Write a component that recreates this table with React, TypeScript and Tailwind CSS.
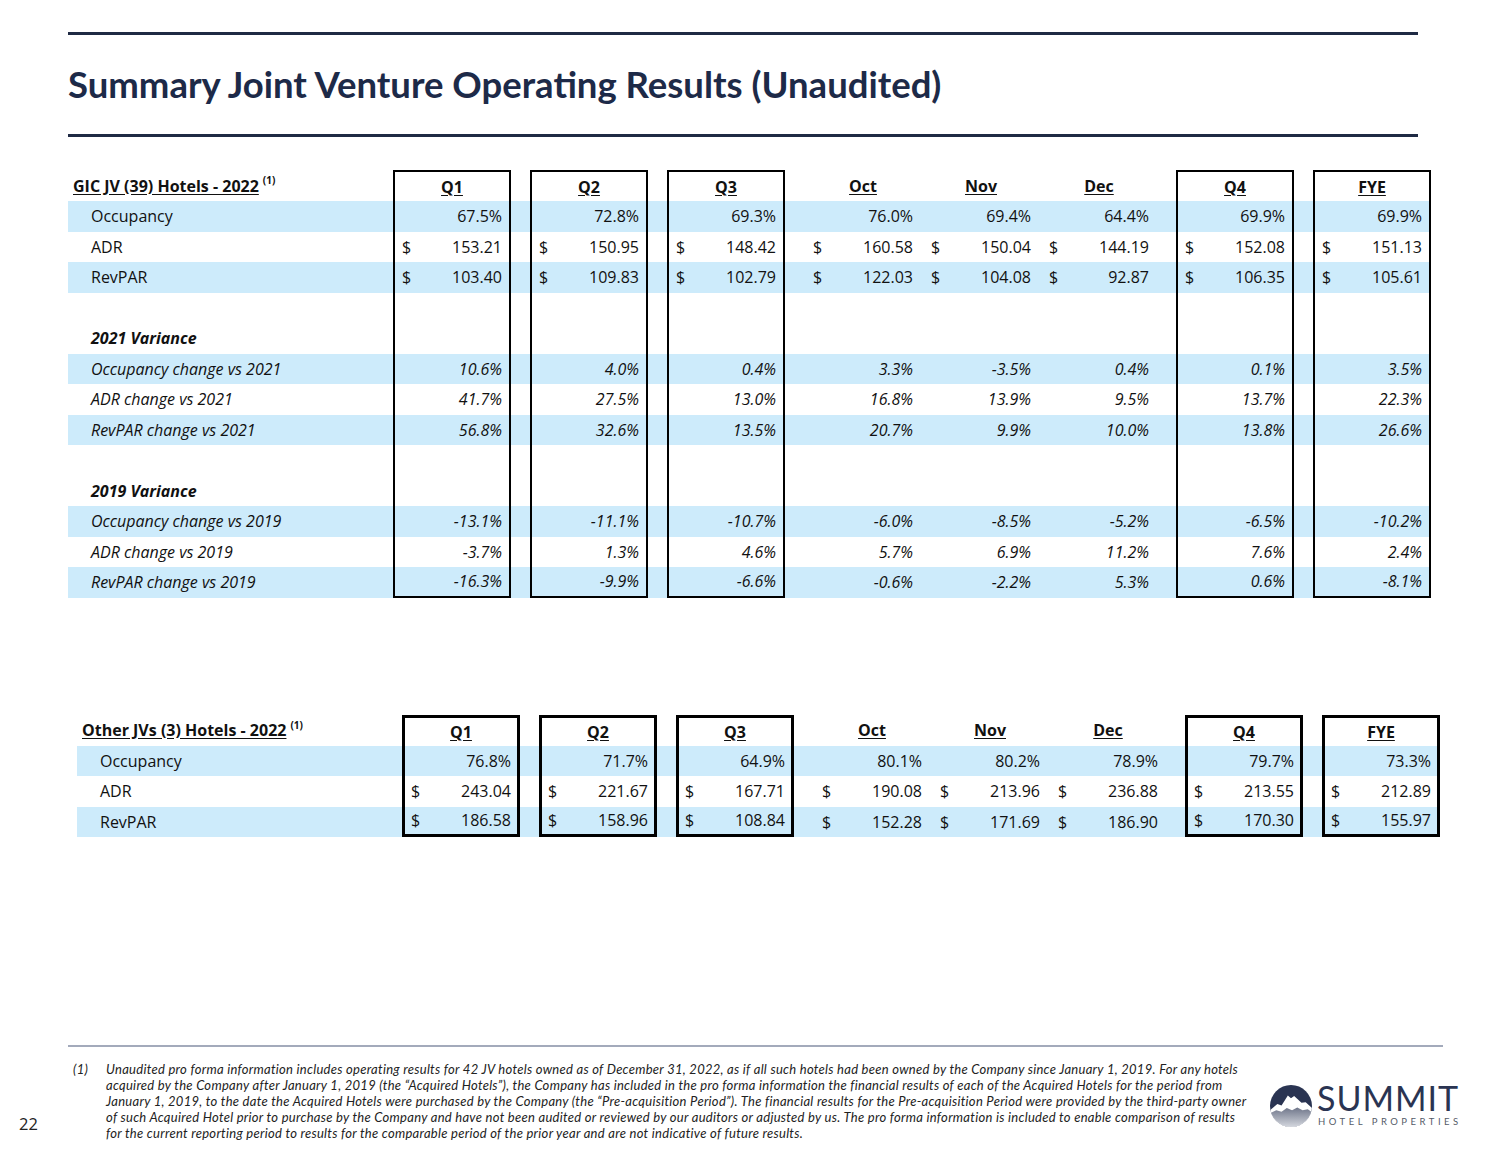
import React from "react";

type Row =
  | { kind: "blank" }
  | { kind: "section"; label: string }
  | { kind: "data"; label: string; values: string[]; dollar?: boolean; italic?: boolean; blue: boolean };

const COLS = ["Q1", "Q2", "Q3", "Oct", "Nov", "Dec", "Q4", "FYE"];
const BOXED = [true, true, true, false, false, false, true, true];

// slots in the grid: label, then value columns with spacer slots between boxes
const SLOTS: (number | "sp")[] = [0, "sp", 1, "sp", 2, "sp", 3, 4, 5, "sp", 6, "sp", 7];

const GIC_ROWS: Row[] = [
  { kind: "data", label: "Occupancy", blue: true, values: ["67.5%", "72.8%", "69.3%", "76.0%", "69.4%", "64.4%", "69.9%", "69.9%"] },
  { kind: "data", label: "ADR", blue: false, dollar: true, values: ["153.21", "150.95", "148.42", "160.58", "150.04", "144.19", "152.08", "151.13"] },
  { kind: "data", label: "RevPAR", blue: true, dollar: true, values: ["103.40", "109.83", "102.79", "122.03", "104.08", "92.87", "106.35", "105.61"] },
  { kind: "blank" },
  { kind: "section", label: "2021 Variance" },
  { kind: "data", label: "Occupancy change vs 2021", blue: true, italic: true, values: ["10.6%", "4.0%", "0.4%", "3.3%", "-3.5%", "0.4%", "0.1%", "3.5%"] },
  { kind: "data", label: "ADR change vs 2021", blue: false, italic: true, values: ["41.7%", "27.5%", "13.0%", "16.8%", "13.9%", "9.5%", "13.7%", "22.3%"] },
  { kind: "data", label: "RevPAR change vs 2021", blue: true, italic: true, values: ["56.8%", "32.6%", "13.5%", "20.7%", "9.9%", "10.0%", "13.8%", "26.6%"] },
  { kind: "blank" },
  { kind: "section", label: "2019 Variance" },
  { kind: "data", label: "Occupancy change vs 2019", blue: true, italic: true, values: ["-13.1%", "-11.1%", "-10.7%", "-6.0%", "-8.5%", "-5.2%", "-6.5%", "-10.2%"] },
  { kind: "data", label: "ADR change vs 2019", blue: false, italic: true, values: ["-3.7%", "1.3%", "4.6%", "5.7%", "6.9%", "11.2%", "7.6%", "2.4%"] },
  { kind: "data", label: "RevPAR change vs 2019", blue: true, italic: true, values: ["-16.3%", "-9.9%", "-6.6%", "-0.6%", "-2.2%", "5.3%", "0.6%", "-8.1%"] },
];

const OTHER_ROWS: Row[] = [
  { kind: "data", label: "Occupancy", blue: true, values: ["76.8%", "71.7%", "64.9%", "80.1%", "80.2%", "78.9%", "79.7%", "73.3%"] },
  { kind: "data", label: "ADR", blue: false, dollar: true, values: ["243.04", "221.67", "167.71", "190.08", "213.96", "236.88", "213.55", "212.89"] },
  { kind: "data", label: "RevPAR", blue: true, dollar: true, values: ["186.58", "158.96", "108.84", "152.28", "171.69", "186.90", "170.30", "155.97"] },
];

const GRID =
  "grid grid-cols-[325px_118px_19px_118px_19px_118px_19px_118px_118px_118px_18px_118px_19px_118px]";

function edge(boxed: boolean, thick: boolean, top: boolean, bottom: boolean) {
  if (!boxed) return "px-[9px]";
  let c = thick ? "border-x-[3px] border-black px-[6px]" : "border-x-2 border-black px-[7px]";
  if (top) c += thick ? " border-t-[3px]" : " border-t-2";
  if (bottom) c += thick ? " border-b-[3px]" : " border-b-2";
  return c;
}

function Table({ title, rows, thick }: { title: string; rows: Row[]; thick: boolean }) {
  return (
    <div className="flex flex-col w-[1363px] text-[16px] text-[#111]">
      <div className={`${GRID} h-[31px]`}>
        <div className="flex items-center pl-[5px]">
          <span className="font-bold underline underline-offset-2">{title}</span>
          <span className="font-bold text-[10px] ml-[4px] -mt-[10px]">(1)</span>
        </div>
        {SLOTS.map((s, i) =>
          s === "sp" ? (
            <div key={i} />
          ) : (
            <div
              key={i}
              className={`flex items-center justify-center font-bold ${edge(BOXED[s], thick, true, false)}`}
            >
              <span className="underline underline-offset-2">{COLS[s]}</span>
            </div>
          )
        )}
      </div>
      {rows.map((r, ri) => {
        const last = ri === rows.length - 1;
        const blue = r.kind === "data" && r.blue;
        return (
          <div key={ri} className={`${GRID} h-[30.5px] ${blue ? "bg-[#cdebfb]" : "bg-white"}`}>
            <div className={`flex items-center pl-[23px] ${r.kind === "data" && r.italic ? "italic" : ""}`}>
              {r.kind === "section" && <span className="font-bold italic">{r.label}</span>}
              {r.kind === "data" && <span>{r.label}</span>}
            </div>
            {SLOTS.map((s, i) =>
              s === "sp" ? (
                <div key={i} />
              ) : (
                <div
                  key={i}
                  className={`flex items-center justify-between ${edge(BOXED[s], thick, false, last)} ${
                    r.kind === "data" && r.italic ? "italic" : ""
                  }`}
                >
                  <span>{r.kind === "data" && r.dollar ? "$" : ""}</span>
                  <span>{r.kind === "data" ? r.values[s] : ""}</span>
                </div>
              )
            )}
          </div>
        );
      })}
    </div>
  );
}

function Logo() {
  return (
    <div className="flex items-center gap-[5px]">
      <svg width="42" height="42" viewBox="0 0 40 40">
        <defs>
          <clipPath id="lc">
            <circle cx="20" cy="20" r="20" />
          </clipPath>
          <linearGradient id="lg" x1="0" y1="0" x2="0" y2="1">
            <stop offset="0" stopColor="#6f768a" />
            <stop offset="1" stopColor="#d4d7de" />
          </linearGradient>
        </defs>
        <g clipPath="url(#lc)">
          <rect x="0" y="0" width="40" height="40" fill="#2a3452" />
          <path d="M0 24 L7 18 L11 19.5 L17 10 L20 12.5 L23 10.5 L30 17 L34 16.5 L40 22 L40 40 L0 40 Z" fill="#ffffff" />
          <path d="M0 27 L6 24 L11 25.5 L16 22 L21 24 L26 21.5 L31 24 L36 23 L40 26 L40 40 L0 40 Z" fill="url(#lg)" />
        </g>
      </svg>
      <div className="flex flex-col items-start" style={{ fontFamily: "Lato, 'Open Sans', sans-serif" }}>
        <span className="text-[34px] leading-[30px] tracking-[1px] text-[#2a3452] font-normal">SUMMIT</span>
        <span className="text-[9.5px] leading-[12px] tracking-[3.5px] text-[#555b68] mt-[3px] ml-[1px]">HOTEL PROPERTIES</span>
      </div>
    </div>
  );
}

const NOTE = [
  "Unaudited pro forma information includes operating results for 42 JV hotels owned as of December 31, 2022, as if all such hotels had been owned by the Company since January 1, 2019. For any hotels",
  "acquired by the Company after January 1, 2019 (the \u201CAcquired Hotels\u201D), the Company has included in the pro forma information the financial results of each of the Acquired Hotels for the period from",
  "January 1, 2019, to the date the Acquired Hotels were purchased by the Company (the \u201CPre-acquisition Period\u201D). The financial results for the Pre-acquisition Period were provided by the third-party owner",
  "of such Acquired Hotel prior to purchase by the Company and have not been audited or reviewed by our auditors or adjusted by us. The pro forma information is included to enable comparison of results",
  "for the current reporting period to results for the comparable period of the prior year and are not indicative of future results.",
];

export default function App() {
  return (
    <div
      className="w-[1500px] h-[1159px] bg-white flex flex-col overflow-hidden"
      style={{ fontFamily: "'Open Sans', 'Noto Sans', sans-serif" }}
    >
      <div className="mt-[32px] ml-[68px] w-[1350px] h-[3px] bg-[#1f2a44]" />
      <div className="ml-[68px] h-[99px] flex items-center">
        <h1
          className="text-[36.5px] font-bold text-[#1d2a48] leading-none"
          style={{ fontFamily: "Lato, 'Open Sans', sans-serif" }}
        >
          Summary Joint Venture Operating Results (Unaudited)
        </h1>
      </div>
      <div className="ml-[68px] w-[1350px] h-[3px] bg-[#1f2a44]" />

      <div className="mt-[33px] ml-[68px]">
        <Table title="GIC JV (39) Hotels - 2022" rows={GIC_ROWS} thick={false} />
      </div>

      <div className="mt-[117px] ml-[77px]">
        <Table title="Other JVs (3) Hotels - 2022" rows={OTHER_ROWS} thick={true} />
      </div>

      <div className="mt-[208px] ml-[68px] w-[1375px] h-[2px] bg-[#a3aabb]" />
      <div className="flex items-start mt-[14px]">
        <div className="w-[68px] pl-[19px] pt-[51px] text-[16.5px] text-[#222]">22</div>
        <div
          className="flex text-[13px] leading-[16px] tracking-[0.28px] italic text-[#222]"
          style={{ fontFamily: "Lato, 'Open Sans', sans-serif" }}
        >
          <div className="w-[38px] pl-[5px]">(1)</div>
          <div className="flex flex-col w-[1160px]">
            {NOTE.map((l, i) => (
              <div key={i} className="whitespace-nowrap">
                {l}
              </div>
            ))}
          </div>
        </div>
        <div className="ml-[4px] mt-[22px]">
          <Logo />
        </div>
      </div>
    </div>
  );
}
